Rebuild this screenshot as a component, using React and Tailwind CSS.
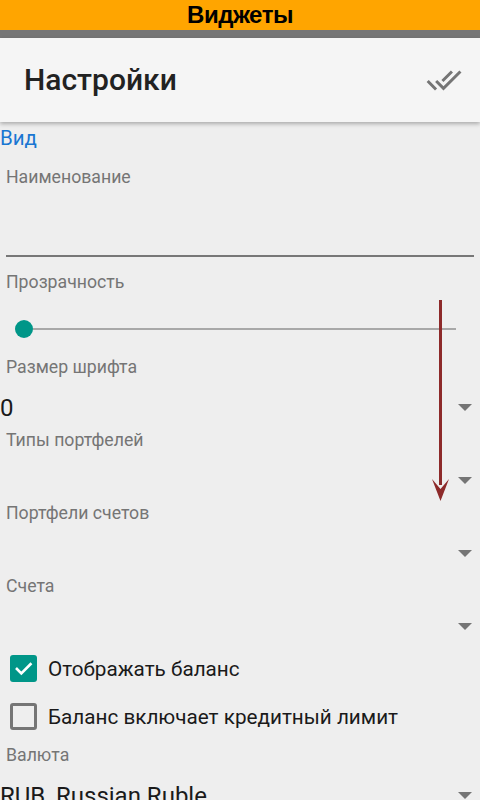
import React from "react";

const Tri = ({ className = "" }) => (
  <div className={"w-0 h-0 border-l-[7px] border-r-[7px] border-t-[7px] border-l-transparent border-r-transparent border-t-[#757575] " + className} />
);

function Spinner({ label, value, rowH = "h-[53px]" }) {
  return (
    <div className="flex flex-col">
      <div className="h-[20px] pl-[6px] text-[17.7px] leading-[20px] text-[#757575]">{label}</div>
      <div className={"relative flex items-start justify-between " + rowH}>
        <div className="mt-[17px] h-[28px] text-[24px] leading-[28px] text-[#1a1a1a] whitespace-nowrap">{value}</div>
        <Tri className="mt-[27px] mr-[8px]" />
      </div>
    </div>
  );
}

function Checkbox({ checked, label }) {
  return (
    <div className="flex items-start h-[48px] pl-[10px]">
      {checked ? (
        <div className="mt-[6px] w-[27px] h-[27px] rounded-[3px] bg-[#009688] flex items-center justify-center">
          <svg width="21" height="21" viewBox="0 0 24 24" fill="none" stroke="white" strokeWidth="3" strokeLinecap="square">
            <path d="M4.5 12.5l5 5L20 7" />
          </svg>
        </div>
      ) : (
        <div className="mt-[6px] w-[27px] h-[27px] rounded-[3px] border-[3px] border-[#757575]" />
      )}
      <div className="ml-[11px] mt-[8px] text-[20.7px] leading-[24px] text-[#1a1a1a] whitespace-nowrap">{label}</div>
    </div>
  );
}

export default function App() {
  return (
    <div className="relative w-[480px] h-[800px] overflow-hidden bg-[#eeeeee] font-['Roboto',sans-serif]">
      <div className="h-[30px] bg-[#ffa500] flex items-center justify-center">
        <span className="font-['Liberation_Sans',Arial,sans-serif] font-bold text-[24px] leading-[30px] tracking-[-0.5px] text-black">Виджеты</span>
      </div>
      <div className="h-[8px] bg-[#767676]" />
      <div className="relative z-10 h-[84px] bg-[#f5f5f5] shadow-[0_2px_4px_rgba(0,0,0,0.28)] flex items-center justify-between pl-[24px] pr-[18px]">
        <span className="text-[30px] leading-[34px] font-medium text-[#222222]">Настройки</span>
        <svg width="36" height="36" viewBox="0 0 24 24" fill="#757575">
          <path d="M18 7l-1.41-1.41-6.34 6.34 1.41 1.41L18 7zm4.24-1.41L11.66 16.17 7.48 12l-1.41 1.41L11.66 19l12-12-1.42-1.41zM.41 13.41L6 19l1.41-1.41L1.83 12 .41 13.41z" />
        </svg>
      </div>
      <div className="flex flex-col">
        <div className="mt-[4px] h-[24px] text-[20.5px] leading-[24px] text-[#1976d2]">Вид</div>
        <div className="mt-[17px] h-[20px] pl-[6px] text-[17.7px] leading-[20px] text-[#757575]">Наименование</div>
        <div className="h-[70px] mx-[6px] border-b-2 border-[#777777]" />
        <div className="mt-[15px] h-[20px] pl-[6px] text-[17.7px] leading-[20px] text-[#757575]">Прозрачность</div>
        <div className="mt-[28px] h-[18px] relative flex items-center pl-[15px] pr-[24px]">
          <div className="w-[18px] h-[18px] rounded-full bg-[#009688] shrink-0" />
          <div className="flex-1 h-[2px] bg-[#a8a8a8]" />
        </div>
        <div className="mt-[19px]">
          <Spinner label="Размер шрифта" value="0" />
          <Spinner label="Типы портфелей" value="" />
          <Spinner label="Портфели счетов" value="" />
          <Spinner label="Счета" value="" />
        </div>
        <Checkbox checked label="Отображать баланс" />
        <Checkbox label="Баланс включает кредитный лимит" />
        <Spinner label="Валюта" value="RUB, Russian Ruble" rowH="h-[60px]" />
      </div>
      <svg className="absolute left-0 top-0 pointer-events-none" width="480" height="800" viewBox="0 0 480 800">
        <rect x="439" y="300" width="3" height="185" fill="#8d2a2a" />
        <polygon points="432,479 440.5,489 449,479 440.5,501" fill="#8d2a2a" />
      </svg>
    </div>
  );
}
